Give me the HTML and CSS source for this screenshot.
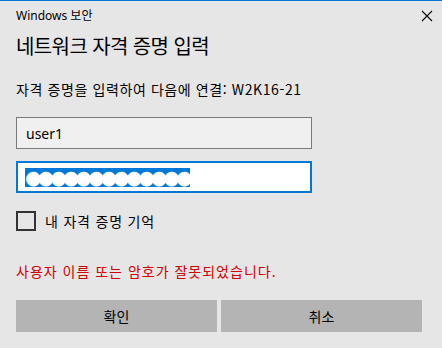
FILE: index.html
```html
<!DOCTYPE html>
<html lang="ko">
<head>
<meta charset="utf-8">
<link rel="stylesheet" href="styles.css">
</head>
<body>
<div class="dialog">
  <div class="titlebar">
    <span class="app-title">Windows 보안</span>
    <svg class="close" width="12" height="12" viewBox="0 0 12 12"><path d="M1 1 L11 11 M11 1 L1 11" stroke="#000" stroke-width="1.1" fill="none"/></svg>
  </div>
  <h1 class="heading">네트워크 자격 증명 입력</h1>
  <p class="subtitle">자격 증명을 입력하여 다음에 연결: W2K16-21</p>
  <div class="field user">user1</div>
  <div class="field pass"><span class="sel">●●●●●●●●●●●●●</span></div>
  <label class="remember"><span class="box"></span><span class="remember-text">내 자격 증명 기억</span></label>
  <p class="error">사용자 이름 또는 암호가 잘못되었습니다.</p>
  <div class="buttons">
    <div class="btn">확인</div>
    <div class="btn">취소</div>
  </div>
</div>
</body>
</html>
```
FILE: styles.css
```css
* { box-sizing: border-box; }
html, body { margin: 0; padding: 0; }
body {
  width: 442px;
  height: 348px;
  background: #e6e6e6;
  font-family: "Noto Sans", "Noto Sans CJK KR", sans-serif;
  color: #000;
  overflow: hidden;
}
.dialog {
  height: 348px;
  border-top: 1px solid #0078d7;
  padding: 0 20px 0 16px;
  display: flex;
  flex-direction: column;
}
.titlebar {
  height: 29px;
  display: flex;
  align-items: center;
  justify-content: space-between;
  margin-right: -11px;
}
.app-title {
  font-size: 12px;
  line-height: 16px;
}
.close { display: block; }
.heading {
  margin: 1px 0 0 0;
  font-size: 20px;
  font-weight: normal;
  line-height: 30px;
  letter-spacing: -0.6px;
  font-family: "Noto Sans CJK KR", sans-serif;
}
.subtitle {
  margin: 18px 0 0 0;
  font-size: 14px;
  line-height: 20px;
  letter-spacing: 0.6px;
  font-family: "Noto Sans CJK KR", sans-serif;
}
.field {
  width: 296px;
  height: 32px;
  display: flex;
  align-items: center;
  font-size: 14px;
  font-family: "Noto Sans", sans-serif;
}
.user {
  margin-top: 18px;
  background: #f0f0f0;
  border: 1px solid #7a7a7a;
  padding-left: 9px;
}
.pass {
  margin-top: 12px;
  background: #fff;
  border: 2px solid #0078d7;
  padding-left: 7px;
}
.sel {
  background: #0078d7;
  color: #fff;
  font-family: "DejaVu Sans", sans-serif;
  font-size: 19px;
  line-height: 19px;
  letter-spacing: -4px;
  display: inline-block;
  white-space: nowrap;
  padding-right: 1px;
}
.remember {
  margin-top: 18px;
  display: flex;
  align-items: center;
  height: 20px;
}
.box {
  width: 20px;
  height: 20px;
  border: 2px solid #333;
}
.remember-text {
  margin-left: 9px;
  font-size: 14px;
  font-family: "Noto Sans CJK KR", sans-serif;
  letter-spacing: 0.8px;
}
.error {
  margin: 30px 0 0 0;
  color: #d00000;
  font-size: 14px;
  line-height: 20px;
  letter-spacing: 1px;
  font-family: "Noto Sans CJK KR", sans-serif;
}
.buttons {
  margin-top: 19px;
  display: flex;
  gap: 4px;
}
.btn {
  flex: 1;
  height: 32px;
  background: #b4b4b4;
  display: flex;
  align-items: center;
  justify-content: center;
  font-size: 14px;
  font-family: "Noto Sans CJK KR", sans-serif;
}
```
